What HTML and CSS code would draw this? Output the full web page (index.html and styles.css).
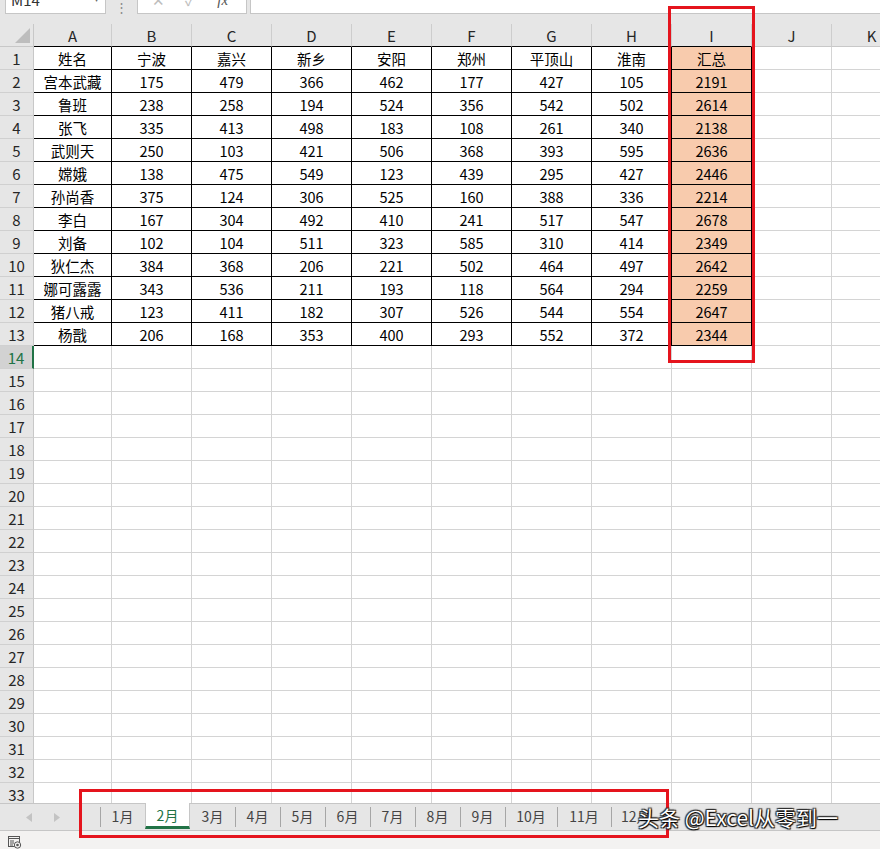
FILE: index.html
```html
<!DOCTYPE html>
<html lang="zh-CN">
<head>
<meta charset="utf-8">
<title>Excel</title>
<link rel="stylesheet" href="styles.css">
</head>
<body>
<div class="app">
  <div class="fbar">
    <div class="namebox"><span class="nb-text">M14</span><span class="nb-arrow">▾</span></div>
    <div class="dots">⋮</div>
    <div class="fbtns"><span class="fb-x">✕</span><span class="fb-v">✓</span><span class="fb-fx">fx</span></div>
    <div class="finput"></div>
  </div>

  <div class="sheet">
    <div class="row hdr">
      <div class="corner"><svg width="15" height="15" viewBox="0 0 15 15"><polygon points="15,0 15,15 0,15" fill="#bdbdbd"/></svg></div>
      <div class="ch blk">A</div><div class="ch blk">B</div><div class="ch blk">C</div><div class="ch blk">D</div><div class="ch blk">E</div><div class="ch blk">F</div><div class="ch blk">G</div><div class="ch blk">H</div><div class="ch blk">I</div><div class="ch">J</div><div class="ch">K</div>
    </div>

    <div class="row"><div class="rh">1</div><div class="c d">姓名</div><div class="c d">宁波</div><div class="c d">嘉兴</div><div class="c d">新乡</div><div class="c d">安阳</div><div class="c d">郑州</div><div class="c d">平顶山</div><div class="c d">淮南</div><div class="c d sum">汇总</div><div class="c"></div><div class="c"></div></div>
    <div class="row"><div class="rh">2</div><div class="c d">宫本武藏</div><div class="c d">175</div><div class="c d">479</div><div class="c d">366</div><div class="c d">462</div><div class="c d">177</div><div class="c d">427</div><div class="c d">105</div><div class="c d sum">2191</div><div class="c"></div><div class="c"></div></div>
    <div class="row"><div class="rh">3</div><div class="c d">鲁班</div><div class="c d">238</div><div class="c d">258</div><div class="c d">194</div><div class="c d">524</div><div class="c d">356</div><div class="c d">542</div><div class="c d">502</div><div class="c d sum">2614</div><div class="c"></div><div class="c"></div></div>
    <div class="row"><div class="rh">4</div><div class="c d">张飞</div><div class="c d">335</div><div class="c d">413</div><div class="c d">498</div><div class="c d">183</div><div class="c d">108</div><div class="c d">261</div><div class="c d">340</div><div class="c d sum">2138</div><div class="c"></div><div class="c"></div></div>
    <div class="row"><div class="rh">5</div><div class="c d">武则天</div><div class="c d">250</div><div class="c d">103</div><div class="c d">421</div><div class="c d">506</div><div class="c d">368</div><div class="c d">393</div><div class="c d">595</div><div class="c d sum">2636</div><div class="c"></div><div class="c"></div></div>
    <div class="row"><div class="rh">6</div><div class="c d">嫦娥</div><div class="c d">138</div><div class="c d">475</div><div class="c d">549</div><div class="c d">123</div><div class="c d">439</div><div class="c d">295</div><div class="c d">427</div><div class="c d sum">2446</div><div class="c"></div><div class="c"></div></div>
    <div class="row"><div class="rh">7</div><div class="c d">孙尚香</div><div class="c d">375</div><div class="c d">124</div><div class="c d">306</div><div class="c d">525</div><div class="c d">160</div><div class="c d">388</div><div class="c d">336</div><div class="c d sum">2214</div><div class="c"></div><div class="c"></div></div>
    <div class="row"><div class="rh">8</div><div class="c d">李白</div><div class="c d">167</div><div class="c d">304</div><div class="c d">492</div><div class="c d">410</div><div class="c d">241</div><div class="c d">517</div><div class="c d">547</div><div class="c d sum">2678</div><div class="c"></div><div class="c"></div></div>
    <div class="row"><div class="rh">9</div><div class="c d">刘备</div><div class="c d">102</div><div class="c d">104</div><div class="c d">511</div><div class="c d">323</div><div class="c d">585</div><div class="c d">310</div><div class="c d">414</div><div class="c d sum">2349</div><div class="c"></div><div class="c"></div></div>
    <div class="row"><div class="rh">10</div><div class="c d">狄仁杰</div><div class="c d">384</div><div class="c d">368</div><div class="c d">206</div><div class="c d">221</div><div class="c d">502</div><div class="c d">464</div><div class="c d">497</div><div class="c d sum">2642</div><div class="c"></div><div class="c"></div></div>
    <div class="row"><div class="rh">11</div><div class="c d">娜可露露</div><div class="c d">343</div><div class="c d">536</div><div class="c d">211</div><div class="c d">193</div><div class="c d">118</div><div class="c d">564</div><div class="c d">294</div><div class="c d sum">2259</div><div class="c"></div><div class="c"></div></div>
    <div class="row"><div class="rh">12</div><div class="c d">猪八戒</div><div class="c d">123</div><div class="c d">411</div><div class="c d">182</div><div class="c d">307</div><div class="c d">526</div><div class="c d">544</div><div class="c d">554</div><div class="c d sum">2647</div><div class="c"></div><div class="c"></div></div>
    <div class="row"><div class="rh">13</div><div class="c d">杨戬</div><div class="c d">206</div><div class="c d">168</div><div class="c d">353</div><div class="c d">400</div><div class="c d">293</div><div class="c d">552</div><div class="c d">372</div><div class="c d sum">2344</div><div class="c"></div><div class="c"></div></div>

    <div class="row"><div class="rh sel">14</div><span class="c"></span><span class="c"></span><span class="c"></span><span class="c"></span><span class="c"></span><span class="c"></span><span class="c"></span><span class="c"></span><span class="c"></span><span class="c"></span><span class="c"></span></div>
    <div class="row"><div class="rh">15</div><span class="c"></span><span class="c"></span><span class="c"></span><span class="c"></span><span class="c"></span><span class="c"></span><span class="c"></span><span class="c"></span><span class="c"></span><span class="c"></span><span class="c"></span></div>
    <div class="row"><div class="rh">16</div><span class="c"></span><span class="c"></span><span class="c"></span><span class="c"></span><span class="c"></span><span class="c"></span><span class="c"></span><span class="c"></span><span class="c"></span><span class="c"></span><span class="c"></span></div>
    <div class="row"><div class="rh">17</div><span class="c"></span><span class="c"></span><span class="c"></span><span class="c"></span><span class="c"></span><span class="c"></span><span class="c"></span><span class="c"></span><span class="c"></span><span class="c"></span><span class="c"></span></div>
    <div class="row"><div class="rh">18</div><span class="c"></span><span class="c"></span><span class="c"></span><span class="c"></span><span class="c"></span><span class="c"></span><span class="c"></span><span class="c"></span><span class="c"></span><span class="c"></span><span class="c"></span></div>
    <div class="row"><div class="rh">19</div><span class="c"></span><span class="c"></span><span class="c"></span><span class="c"></span><span class="c"></span><span class="c"></span><span class="c"></span><span class="c"></span><span class="c"></span><span class="c"></span><span class="c"></span></div>
    <div class="row"><div class="rh">20</div><span class="c"></span><span class="c"></span><span class="c"></span><span class="c"></span><span class="c"></span><span class="c"></span><span class="c"></span><span class="c"></span><span class="c"></span><span class="c"></span><span class="c"></span></div>
    <div class="row"><div class="rh">21</div><span class="c"></span><span class="c"></span><span class="c"></span><span class="c"></span><span class="c"></span><span class="c"></span><span class="c"></span><span class="c"></span><span class="c"></span><span class="c"></span><span class="c"></span></div>
    <div class="row"><div class="rh">22</div><span class="c"></span><span class="c"></span><span class="c"></span><span class="c"></span><span class="c"></span><span class="c"></span><span class="c"></span><span class="c"></span><span class="c"></span><span class="c"></span><span class="c"></span></div>
    <div class="row"><div class="rh">23</div><span class="c"></span><span class="c"></span><span class="c"></span><span class="c"></span><span class="c"></span><span class="c"></span><span class="c"></span><span class="c"></span><span class="c"></span><span class="c"></span><span class="c"></span></div>
    <div class="row"><div class="rh">24</div><span class="c"></span><span class="c"></span><span class="c"></span><span class="c"></span><span class="c"></span><span class="c"></span><span class="c"></span><span class="c"></span><span class="c"></span><span class="c"></span><span class="c"></span></div>
    <div class="row"><div class="rh">25</div><span class="c"></span><span class="c"></span><span class="c"></span><span class="c"></span><span class="c"></span><span class="c"></span><span class="c"></span><span class="c"></span><span class="c"></span><span class="c"></span><span class="c"></span></div>
    <div class="row"><div class="rh">26</div><span class="c"></span><span class="c"></span><span class="c"></span><span class="c"></span><span class="c"></span><span class="c"></span><span class="c"></span><span class="c"></span><span class="c"></span><span class="c"></span><span class="c"></span></div>
    <div class="row"><div class="rh">27</div><span class="c"></span><span class="c"></span><span class="c"></span><span class="c"></span><span class="c"></span><span class="c"></span><span class="c"></span><span class="c"></span><span class="c"></span><span class="c"></span><span class="c"></span></div>
    <div class="row"><div class="rh">28</div><span class="c"></span><span class="c"></span><span class="c"></span><span class="c"></span><span class="c"></span><span class="c"></span><span class="c"></span><span class="c"></span><span class="c"></span><span class="c"></span><span class="c"></span></div>
    <div class="row"><div class="rh">29</div><span class="c"></span><span class="c"></span><span class="c"></span><span class="c"></span><span class="c"></span><span class="c"></span><span class="c"></span><span class="c"></span><span class="c"></span><span class="c"></span><span class="c"></span></div>
    <div class="row"><div class="rh">30</div><span class="c"></span><span class="c"></span><span class="c"></span><span class="c"></span><span class="c"></span><span class="c"></span><span class="c"></span><span class="c"></span><span class="c"></span><span class="c"></span><span class="c"></span></div>
    <div class="row"><div class="rh">31</div><span class="c"></span><span class="c"></span><span class="c"></span><span class="c"></span><span class="c"></span><span class="c"></span><span class="c"></span><span class="c"></span><span class="c"></span><span class="c"></span><span class="c"></span></div>
    <div class="row"><div class="rh">32</div><span class="c"></span><span class="c"></span><span class="c"></span><span class="c"></span><span class="c"></span><span class="c"></span><span class="c"></span><span class="c"></span><span class="c"></span><span class="c"></span><span class="c"></span></div>
    <div class="row"><div class="rh">33</div><span class="c"></span><span class="c"></span><span class="c"></span><span class="c"></span><span class="c"></span><span class="c"></span><span class="c"></span><span class="c"></span><span class="c"></span><span class="c"></span><span class="c"></span></div>
  </div>

  <div class="tabbar">
    <div class="nav">
      <svg class="arr" width="6" height="9" viewBox="0 0 6 9"><polygon points="6,0 6,9 0,4.5" fill="#c3c3c3"/></svg>
      <svg class="arr" width="6" height="9" viewBox="0 0 6 9"><polygon points="0,0 0,9 6,4.5" fill="#c3c3c3"/></svg>
    </div>
    <div class="tabs">
      <div class="tab">1月</div>
      <div class="tab active">2月</div>
      <div class="tab">3月</div>
      <div class="tab">4月</div>
      <div class="tab">5月</div>
      <div class="tab">6月</div>
      <div class="tab">7月</div>
      <div class="tab">8月</div>
      <div class="tab">9月</div>
      <div class="tab w10">10月</div>
      <div class="tab w11">11月</div>
      <div class="tab w12">12月</div>
    </div>
  </div>

  <div class="status">
    <svg class="sicon" width="14" height="13" viewBox="0 0 14 13">
      <rect x="0.5" y="0.5" width="11" height="10" fill="none" stroke="#555"/>
      <line x1="0.5" y1="2.5" x2="11.5" y2="2.5" stroke="#555"/>
      <line x1="2" y1="5" x2="6" y2="5" stroke="#555"/>
      <line x1="2" y1="7" x2="6" y2="7" stroke="#555"/>
      <line x1="2" y1="9" x2="5" y2="9" stroke="#555"/>
      <circle cx="9.5" cy="9" r="3.2" fill="#f3f2f1" stroke="#555"/>
      <circle cx="9.5" cy="9" r="1.3" fill="#555"/>
    </svg>
  </div>

  <div class="redbox box-sum"></div>
  <div class="redbox box-tabs"></div>
  <div class="watermark">头条 @Excel从零到一</div>
</div>
</body>
</html>
```

FILE: styles.css
```css
* { box-sizing: border-box; }

html, body {
  margin: 0;
  padding: 0;
}

body {
  width: 880px;
  height: 849px;
  overflow: hidden;
  background: #e6e6e6;
  font-family: "Noto Sans CJK SC", "Noto Sans", sans-serif;
  color: #000;
}

.app {
  position: relative;
  width: 880px;
  height: 849px;
  overflow: hidden;
}

/* ---------- formula bar ---------- */
.fbar {
  height: 24px;
  display: flex;
  align-items: flex-start;
  background: #e6e6e6;
}

.namebox {
  margin-left: 5px;
  width: 101px;
  height: 14px;
  background: #fff;
  border: 1px solid #c6c6c6;
  border-top: none;
  overflow: hidden;
  display: flex;
  justify-content: space-between;
  align-items: flex-start;
  padding: 0 6px 0 5px;
}

.nb-text {
  display: block;
  margin-top: -9px;
  font-size: 15px;
  line-height: 18px;
  color: #333;
}

.nb-arrow {
  display: block;
  margin-top: -9px;
  font-size: 10px;
  line-height: 14px;
  color: #666;
}

.dots {
  width: 31px;
  height: 14px;
  overflow: hidden;
  text-align: center;
  font-size: 13px;
  line-height: 14px;
  color: #8a8a8a;
}

.fbtns {
  width: 110px;
  height: 14px;
  background: #fff;
  border: 1px solid #c6c6c6;
  border-top: none;
  overflow: hidden;
  display: flex;
  align-items: flex-start;
}

.fbtns span {
  display: block;
  margin-top: -9px;
  line-height: 18px;
  font-size: 15px;
  color: #bdbdbd;
}

.fb-x { margin-left: 14px; }
.fb-v { margin-left: 20px; }
.fb-fx {
  margin-left: 22px;
  font-style: italic;
  font-family: "Liberation Serif", serif;
  color: #555 !important;
}

.finput {
  margin-left: 3px;
  flex: 1;
  height: 14px;
  background: #fff;
  border: 1px solid #c6c6c6;
  border-top: none;
  border-right: none;
}

/* ---------- sheet ---------- */
.sheet {
  height: 779px;
  overflow: hidden;
  background: #fff;
}

.row {
  display: grid;
  grid-template-columns: 34px 78px repeat(10, 80px);
  height: 23px;
  width: 912px;
}

.corner {
  background: #e6e6e6;
  border-right: 1px solid #c8c8c8;
  border-bottom: 1px solid #c8c8c8;
  display: flex;
  align-items: flex-end;
  justify-content: flex-end;
  padding: 0 3px 3px 0;
}

.ch {
  background: #e6e6e6;
  border-right: 1px solid #cdcdcd;
  border-bottom: 1px solid #c8c8c8;
  display: flex;
  align-items: center;
  justify-content: center;
  font-size: 15px;
  color: #262626;
}

.ch.blk { border-bottom-color: #000; }

.rh {
  background: #e6e6e6;
  border-right: 1px solid #c8c8c8;
  border-bottom: 1px solid #d0d0d0;
  display: flex;
  align-items: center;
  justify-content: center;
  font-size: 15px;
  color: #262626;
}

.rh.sel {
  background: #d2d2d2;
  color: #217346;
  border-right: 2px solid #217346;
}

.c {
  display: flex;
  align-items: center;
  justify-content: center;
  border-right: 1px solid #d4d4d4;
  border-bottom: 1px solid #d4d4d4;
  font-size: 14.5px;
  color: #000;
  white-space: nowrap;
}

.c.d {
  border-right-color: #000;
  border-bottom-color: #000;
}

.c.sum { background: #f8cbad; }

/* ---------- sheet tabs ---------- */
.tabbar {
  height: 28px;
  display: flex;
  background: #e6e6e6;
  border-top: 1px solid #c6c6c6;
  border-bottom: 1px solid #c6c6c6;
}

.nav {
  width: 100px;
  display: flex;
  align-items: center;
  padding-left: 26px;
  gap: 22px;
}

.tabs {
  display: flex;
  align-items: stretch;
  flex: 1;
}

.tab {
  position: relative;
  width: 45px;
  display: flex;
  align-items: center;
  justify-content: center;
  font-size: 14px;
  color: #444;
  padding-bottom: 2px;
}

.tab::before {
  content: "";
  position: absolute;
  left: 0;
  top: 3px;
  bottom: 3px;
  width: 1px;
  background: #a6a6a6;
}

.tab.active {
  background: #fff;
  color: #217346;
  border-left: 1px solid #c6c6c6;
  border-right: 1px solid #c6c6c6;
  border-bottom: 3px solid #217346;
  margin-top: -1px;
  height: 26px;
  padding-bottom: 0;
}

.tab.active::before,
.tab.active + .tab::before { display: none; }

.tab.w10 { width: 52px; }
.tab.w11 { width: 54px; }
.tab.w12 { width: 60px; justify-content: flex-start; padding-left: 10px; }

/* ---------- status bar ---------- */
.status {
  height: 18px;
  background: #f3f2f1;
  display: flex;
  align-items: flex-end;
  padding-left: 8px;
}

.sicon { display: block; }

/* ---------- overlays ---------- */
.redbox {
  position: absolute;
  border: 3px solid #e5141d;
  pointer-events: none;
}

.box-sum {
  left: 668px;
  top: 6px;
  width: 87px;
  height: 357px;
}

.box-tabs {
  left: 79px;
  top: 789px;
  width: 590px;
  height: 49px;
}

.watermark {
  position: absolute;
  left: 638px;
  top: 802px;
  font-size: 21px;
  line-height: 30px;
  color: #fff;
  white-space: nowrap;
  text-shadow: 0 0 1px #000, 1px 1px 1px #000, -1px -1px 1px #333, 1px -1px 1px #333, -1px 1px 1px #333;
}
```
